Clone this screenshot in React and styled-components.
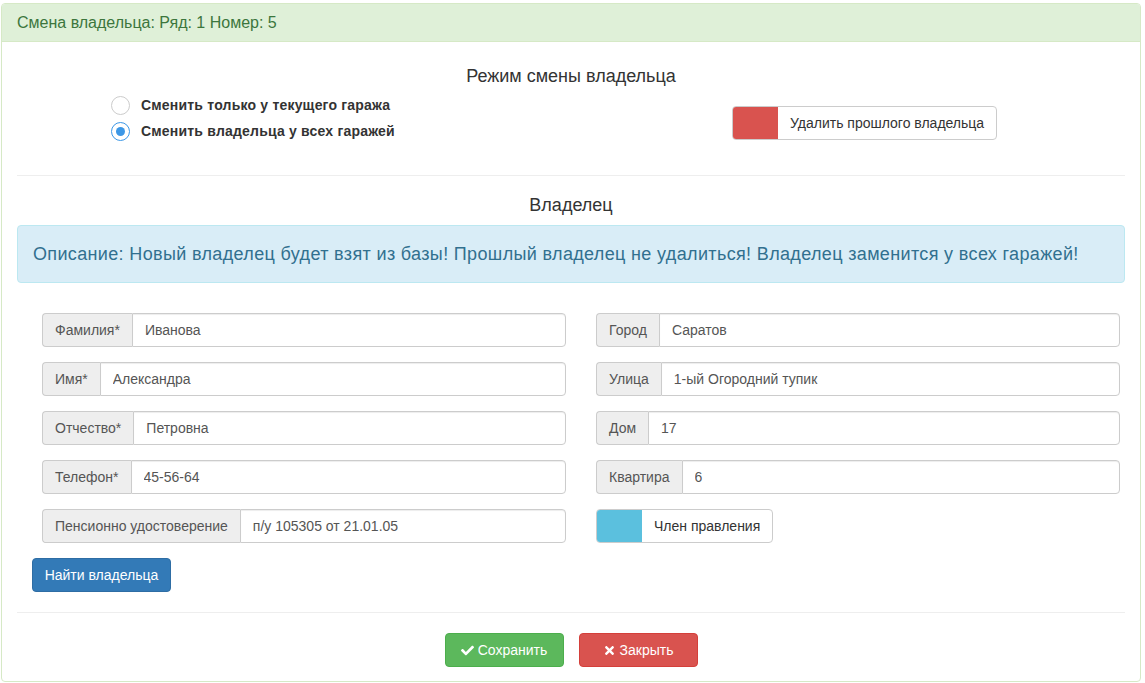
import React from 'react';
import styled, { createGlobalStyle } from 'styled-components';
import { FaCheck, FaTimes } from 'react-icons/fa';

const GlobalStyle = createGlobalStyle`
    body {
        margin: 0;
        background: #fff;
        font-family: 'Liberation Sans', Arial, sans-serif;
        font-size: 14px;
        color: #333;
    }
    * { box-sizing: border-box; }
`

const leftFields = [
    { label: 'Фамилия*', value: 'Иванова' },
    { label: 'Имя*', value: 'Александра' },
    { label: 'Отчество*', value: 'Петровна' },
    { label: 'Телефон*', value: '45-56-64' },
    { label: 'Пенсионно удостоверение', value: 'п/у 105305 от 21.01.05' },
];

const rightFields = [
    { label: 'Город', value: 'Саратов' },
    { label: 'Улица', value: '1-ый Огородний тупик' },
    { label: 'Дом', value: '17' },
    { label: 'Квартира', value: '6' },
];

const Field = ({ label, value }) => (
    <InputGroup>
        <Addon>{label}</Addon>
        <Input defaultValue={value} readOnly />
    </InputGroup>
);

const App = () => {
    return (
        <>
            <GlobalStyle />
            <Panel>
                <PanelHeading>Смена владельца: Ряд: 1 Номер: 5</PanelHeading>
                <PanelBody>
                    <SectionTitle $top={9}>Режим смены владельца</SectionTitle>
                    <ModeRow>
                        <RadioList>
                            <RadioLabel>
                                <RadioDot />
                                Сменить только у текущего гаража
                            </RadioLabel>
                            <RadioLabel>
                                <RadioDot $checked />
                                Сменить владельца у всех гаражей
                            </RadioLabel>
                        </RadioList>
                        <ToggleCell>
                            <Toggle>
                                <Swatch $color="#d9534f" />
                                <ToggleText>Удалить прошлого владельца</ToggleText>
                            </Toggle>
                        </ToggleCell>
                    </ModeRow>
                    <Divider $top={31} />
                    <SectionTitle $top={19}>Владелец</SectionTitle>
                    <Alert>
                        Описание: Новый владелец будет взят из базы! Прошлый владелец не удалиться! Владелец заменится у всех гаражей!
                    </Alert>
                    <FieldGrid>
                        <FieldColumn>
                            {leftFields.map(f => <Field key={f.label} {...f} />)}
                        </FieldColumn>
                        <FieldColumn>
                            {rightFields.map(f => <Field key={f.label} {...f} />)}
                            <Toggle>
                                <Swatch $color="#5bc0de" />
                                <ToggleText>Член правления</ToggleText>
                            </Toggle>
                        </FieldColumn>
                    </FieldGrid>
                    <FindButton>Найти владельца</FindButton>
                    <Divider $top={20} />
                    <Footer>
                        <ActionButton $bg="#5cb85c" $border="#4cae4c">
                            <FaCheck size={13} /> Сохранить
                        </ActionButton>
                        <ActionButton $bg="#d9534f" $border="#d43f3a">
                            <FaTimes size={13} /> Закрыть
                        </ActionButton>
                    </Footer>
                </PanelBody>
            </Panel>
        </>
    );
};

const Panel = styled.div`
    margin: 3px 4px 0 1px;
    border: 1px solid #d6e9c6;
    border-radius: 4px;
    background: #fff;
`

const PanelHeading = styled.div`
    padding: 10px 15px;
    line-height: 17px;
    font-size: 16px;
    color: #3c763d;
    background: #dff0d8;
    border-bottom: 1px solid #d6e9c6;
    border-radius: 3px 3px 0 0;
`

const PanelBody = styled.div`
    padding: 15px 15px 14px;
`

const SectionTitle = styled.h4`
    margin: ${p => p.$top}px 0 0;
    font-size: 18px;
    font-weight: normal;
    line-height: 20px;
    text-align: center;
    color: #333;
`

const ModeRow = styled.div`
    display: grid;
    grid-template-columns: 1fr 1fr;
    margin-top: 6px;
`

const RadioList = styled.div`
    padding-left: 94px;
`

const RadioLabel = styled.label`
    display: flex;
    align-items: center;
    gap: 11px;
    height: 26px;
    font-weight: bold;
    font-size: 14px;
    letter-spacing: 0.2px;
    color: #333;
`

const RadioDot = styled.span`
    position: relative;
    width: 19px;
    height: 19px;
    border-radius: 50%;
    border: 1px solid ${p => p.$checked ? '#3c97e6' : '#ccc'};
    background: #fff;

    &::after {
        content: '';
        display: ${p => p.$checked ? 'block' : 'none'};
        position: absolute;
        left: 4px;
        top: 4px;
        width: 9px;
        height: 9px;
        border-radius: 50%;
        background: #3c97e6;
    }
`

const ToggleCell = styled.div`
    padding-left: 161px;
    padding-top: 14px;
`

const Toggle = styled.div`
    display: inline-flex;
    align-self: flex-start;
    height: 34px;
    border: 1px solid #ccc;
    border-radius: 4px;
    overflow: hidden;
    background: #fff;
`

const Swatch = styled.span`
    width: 45px;
    background: ${p => p.$color};
`

const ToggleText = styled.span`
    display: flex;
    align-items: center;
    padding: 0 12px;
    font-size: 14px;
    color: #333;
`

const Divider = styled.hr`
    margin: ${p => p.$top}px 0 0;
    border: 0;
    border-top: 1px solid #eee;
`

const Alert = styled.div`
    margin-top: 10px;
    padding: 15px;
    font-size: 18px;
    line-height: 26px;
    letter-spacing: 0.35px;
    color: #31708f;
    background: #d9edf7;
    border: 1px solid #bce8f1;
    border-radius: 4px;
`

const FieldGrid = styled.div`
    display: grid;
    grid-template-columns: 1fr 1fr;
    margin-top: 30px;
`

const FieldColumn = styled.div`
    display: flex;
    flex-direction: column;
    gap: 15px;
    padding: 0 5px 0 25px;
`

const InputGroup = styled.div`
    display: flex;
    height: 34px;
`

const Addon = styled.span`
    display: flex;
    align-items: center;
    padding: 0 12px;
    font-size: 14px;
    color: #555;
    white-space: nowrap;
    background: #eee;
    border: 1px solid #ccc;
    border-right: 0;
    border-radius: 4px 0 0 4px;
`

const Input = styled.input`
    flex: 1;
    min-width: 0;
    padding: 0 12px;
    font-family: 'Liberation Sans', Arial, sans-serif;
    font-size: 14px;
    color: #555;
    border: 1px solid #ccc;
    border-radius: 0 4px 4px 0;
    box-shadow: inset 0 1px 1px rgba(0, 0, 0, .075);
    outline: none;
`

const FindButton = styled.button`
    display: block;
    margin: 15px 0 0 15px;
    width: 139px;
    height: 34px;
    padding: 0;
    font-family: 'Liberation Sans', Arial, sans-serif;
    font-size: 14px;
    color: #fff;
    background: #337ab7;
    border: 1px solid #2e6da4;
    border-radius: 4px;
`

const Footer = styled.div`
    display: flex;
    justify-content: center;
    gap: 15px;
    margin-top: 20px;
`

const ActionButton = styled.button`
    display: inline-flex;
    align-items: center;
    justify-content: center;
    gap: 4px;
    width: 119px;
    height: 34px;
    font-family: 'Liberation Sans', Arial, sans-serif;
    font-size: 14px;
    color: #fff;
    background: ${p => p.$bg};
    border: 1px solid ${p => p.$border};
    border-radius: 4px;
`

export default App;
